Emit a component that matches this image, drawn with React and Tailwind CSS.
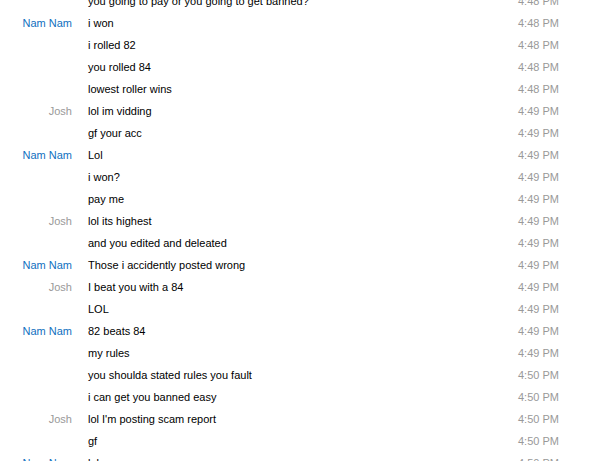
import React from "react";

const messages = [
  { name: "", text: "you going to pay or you going to get banned?", time: "4:48 PM" },
  { name: "Nam Nam", text: "i won", time: "4:48 PM" },
  { name: "", text: "i rolled 82", time: "4:48 PM" },
  { name: "", text: "you rolled 84", time: "4:48 PM" },
  { name: "", text: "lowest roller wins", time: "4:48 PM" },
  { name: "Josh", text: "lol im vidding", time: "4:49 PM" },
  { name: "", text: "gf your acc", time: "4:49 PM" },
  { name: "Nam Nam", text: "Lol", time: "4:49 PM" },
  { name: "", text: "i won?", time: "4:49 PM" },
  { name: "", text: "pay me", time: "4:49 PM" },
  { name: "Josh", text: "lol its highest", time: "4:49 PM" },
  { name: "", text: "and you edited and deleated", time: "4:49 PM" },
  { name: "Nam Nam", text: "Those i accidently posted wrong", time: "4:49 PM" },
  { name: "Josh", text: "I beat you with a 84", time: "4:49 PM" },
  { name: "", text: "LOL", time: "4:49 PM" },
  { name: "Nam Nam", text: "82 beats 84", time: "4:49 PM" },
  { name: "", text: "my rules", time: "4:49 PM" },
  { name: "", text: "you shoulda stated rules you fault", time: "4:50 PM" },
  { name: "", text: "i can get you banned easy", time: "4:50 PM" },
  { name: "Josh", text: "lol I'm posting scam report", time: "4:50 PM" },
  { name: "", text: "gf", time: "4:50 PM" },
  { name: "Nam Nam", text: "lol", time: "4:50 PM" },
];

export default function App() {
  return (
    <div className="w-[604px] h-[461px] overflow-hidden bg-white font-['Liberation_Sans',Arial,sans-serif] text-[11px]">
      <div className="mt-[-10px]">
        {messages.map((m, i) => (
          <div key={i} className="flex items-center h-[22px]">
            <div
              className={`w-[72px] shrink-0 text-right ${
                m.name === "Josh" ? "text-[#999999]" : "text-[#1070c0]"
              }`}
            >
              {m.name}
            </div>
            <div className="w-[446px] shrink-0 pl-[16px] text-black whitespace-nowrap">{m.text}</div>
            <div className="text-[#999999]">{m.time}</div>
          </div>
        ))}
      </div>
    </div>
  );
}
